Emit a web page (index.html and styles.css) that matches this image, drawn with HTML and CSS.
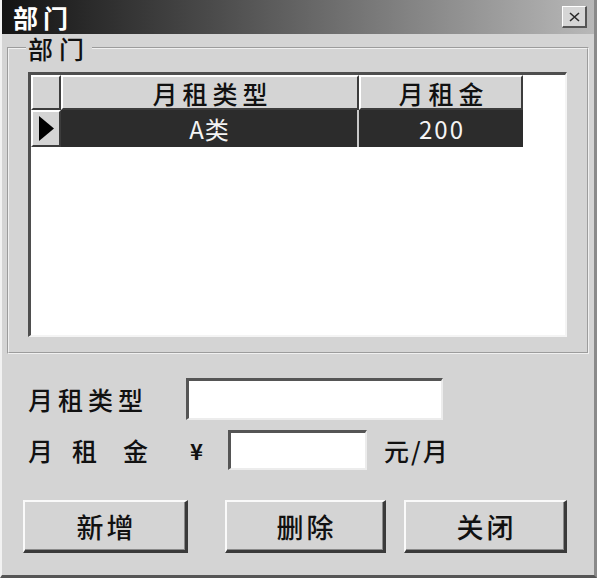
FILE: index.html
```html
<!DOCTYPE html>
<html lang="zh-CN">
<head>
<meta charset="utf-8">
<title>部门</title>
<link rel="stylesheet" href="styles.css">
</head>
<body>
<div class="window">
  <div class="titlebar">
    <span class="title">部门</span>
    <span class="close"><svg width="11" height="10" viewBox="0 0 11 10"><path d="M1 1 L10 9 M10 1 L1 9" stroke="#2a2a2a" stroke-width="1.6" fill="none"/></svg></span>
  </div>
  <div class="body">
    <fieldset class="group">
      <legend class="group-label">部门</legend>
      <div class="grid">
        <div class="row head">
          <div class="cell ind"></div>
          <div class="cell c1">月租类型</div>
          <div class="cell c2">月租金</div>
        </div>
        <div class="row data">
          <div class="cell ind"><svg width="15" height="25" viewBox="0 0 15 25"><polygon points="0,0 15,12.5 0,25" fill="#000"/></svg></div>
          <div class="cell c1">A类</div>
          <div class="cell c2 num">200</div>
        </div>
      </div>
    </fieldset>
    <div class="form">
      <div class="frow r1">
        <span class="label">月租类型</span>
        <span class="input in1"></span>
      </div>
      <div class="frow r2">
        <span class="label spaced"><span class="ch ch1">月</span><span class="ch ch2">租</span><span class="ch">金</span></span>
        <span class="yen">¥</span>
        <span class="input in2"></span>
        <span class="unit">元/月</span>
      </div>
      <div class="buttons">
        <div class="btn b1">新增</div>
        <div class="btn b2">删除</div>
        <div class="btn b3">关闭</div>
      </div>
    </div>
  </div>
</div>
</body>
</html>
```
FILE: styles.css
```css
html, body {
  margin: 0;
  padding: 0;
  background: #d4d4d4;
}
body {
  font-family: "Noto Sans CJK SC", "Liberation Sans", sans-serif;
  color: #111;
  font-weight: 500;
}
.window {
  width: 597px;
  height: 578px;
  box-sizing: border-box;
  background: #d4d4d4;
  border-left: 2px solid #f2f2f2;
  border-right: 3px solid #8a8a8a;
  border-bottom: 3px solid #555;
}
.titlebar {
  height: 34px;
  display: flex;
  align-items: center;
  justify-content: space-between;
  padding: 0 7px 0 11px;
  background: linear-gradient(to right, #131313 0%, #4a4a4a 35%, #b8b8b8 100%);
}
.title {
  color: #fff;
  font-size: 25px;
  font-weight: bold;
  line-height: 28px;
  letter-spacing: 5px;
}
.close {
  width: 25px;
  height: 22px;
  box-sizing: border-box;
  display: flex;
  align-items: center;
  justify-content: center;
  background: #d6d6d6;
  border-top: 1px solid #fff;
  border-left: 1px solid #fff;
  border-right: 2px solid #555;
  border-bottom: 2px solid #555;
}
.body {
  padding: 2px 0 0 5px;
}
.group {
  margin: 0;
  width: 582px;
  box-sizing: border-box;
  min-inline-size: 0;
  border: 2px groove #f0f0f0;
  padding: 12px 20px 15px 19px;
}
.group-label {
  font-size: 25px;
  line-height: 24px;
  padding: 0 2px;
  margin-left: -2px;
  letter-spacing: 6px;
}
.grid {
  width: 539px;
  height: 265px;
  box-sizing: border-box;
  background: #fff;
  border-top: 3px solid #4e4e4e;
  border-left: 3px solid #4e4e4e;
  border-right: 2px solid #f4f4f4;
  border-bottom: 2px solid #f4f4f4;
}
.row {
  display: flex;
}
.cell {
  box-sizing: border-box;
  display: flex;
  align-items: center;
  justify-content: center;
  font-size: 25px;
  letter-spacing: 5px;
  padding-left: 5px;
}
.ind { width: 30px; padding-left: 0; }
.c1 { width: 298px; }
.c2 { width: 164px; }
.head .cell {
  height: 35px;
  background: #d4d4d4;
  border-top: 2px solid #fff;
  border-left: 2px solid #fff;
  border-right: 2px solid #3c3c3c;
  border-bottom: 2px solid #3c3c3c;
}
.data .cell {
  height: 37px;
  background: #2c2c2c;
  color: #f4f4f4;
  font-weight: 400;
  font-size: 24px;
  letter-spacing: 1px;
  padding-left: 1px;
}
.data .c1 {
  border-right: 2px solid #c8c8c8;
}
.data .num {
  letter-spacing: 2px;
  padding-left: 2px;
}
.data .ind {
  background: #d4d4d4;
  border-top: 2px solid #fff;
  border-left: 2px solid #fff;
  border-right: 2px solid #3c3c3c;
  border-bottom: 2px solid #3c3c3c;
  padding-left: 0;
}
.form {
  padding-left: 21px;
  margin-top: 24px;
}
.frow {
  display: flex;
  align-items: center;
  font-size: 25px;
}
.r1 { height: 42px; }
.r2 { height: 40px; margin-top: 10px; }
.label {
  letter-spacing: 5px;
}
.r1 .label { width: 158px; }
.r2 .label { width: 162px; display: flex; letter-spacing: 0; }
.ch1 { margin-right: 19px; }
.ch2 { margin-right: 26px; }
.input {
  display: block;
  box-sizing: border-box;
  height: 100%;
  background: #fff;
  border-top: 3px solid #555;
  border-left: 3px solid #555;
  border-right: 2px solid #ececec;
  border-bottom: 2px solid #ececec;
}
.in1 { width: 257px; }
.in2 { width: 139px; }
.yen {
  width: 38px;
  font-weight: bold;
  font-size: 22px;
}
.unit {
  margin-left: 17px;
  letter-spacing: 2px;
}
.buttons {
  display: flex;
  margin-top: 30px;
  margin-left: -5px;
}
.btn {
  height: 53px;
  box-sizing: border-box;
  display: flex;
  align-items: center;
  justify-content: center;
  font-size: 27px;
  letter-spacing: 3px;
  padding-left: 3px;
  background: #d4d4d4;
  border-top: 2px solid #fafafa;
  border-left: 2px solid #fafafa;
  border-right: 3px solid #3a3a3a;
  border-bottom: 3px solid #3a3a3a;
  box-shadow: inset -1px -1px 0 #8a8a8a;
}
.b1 { width: 165px; }
.b2 { width: 161px; margin-left: 37px; }
.b3 { width: 163px; margin-left: 18px; }
```
